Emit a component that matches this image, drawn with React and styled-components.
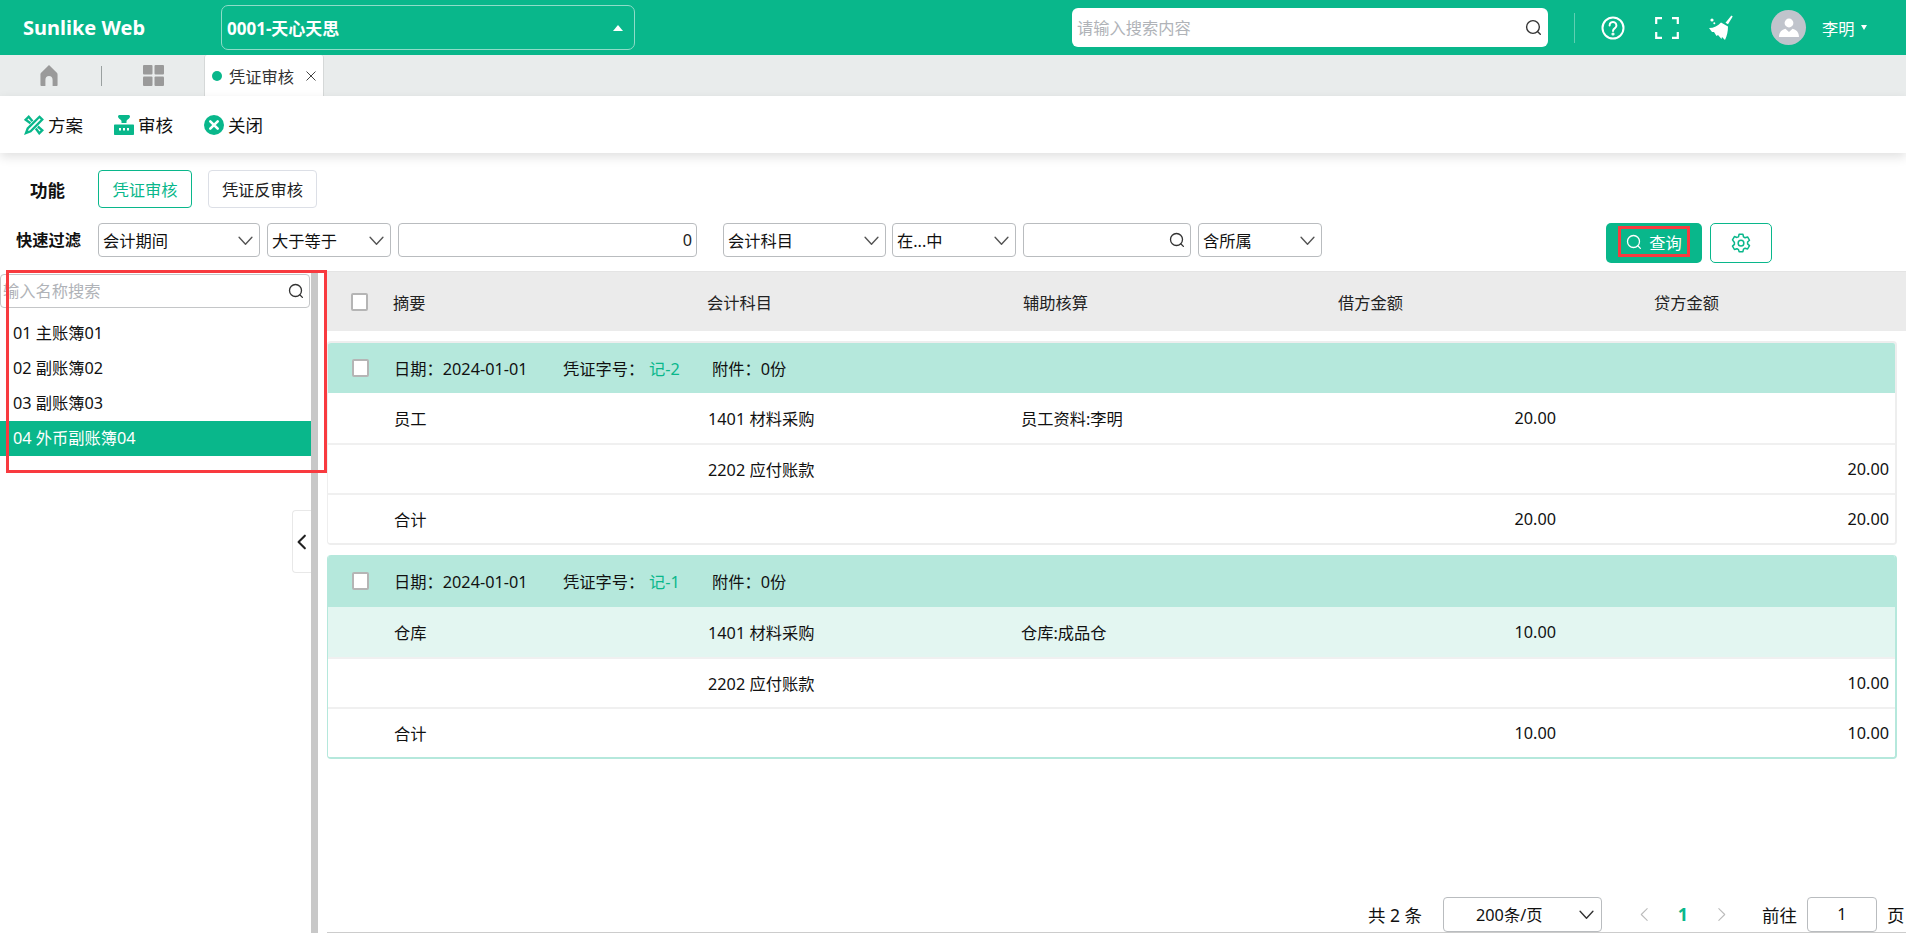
import React from "react";
import styled, { createGlobalStyle } from "styled-components";

const GREEN = "#09b78b";
const RED = "#f83a3f";
const FONT = `"Noto Sans", "Noto Sans CJK SC", sans-serif`;

const Global = createGlobalStyle`
  html, body { margin: 0; padding: 0; background: #fff; }
  body { font-family: ${FONT}; font-size: 16.25px; color: #111; }
  * { box-sizing: border-box; }
`;

const Page = styled.div`
  width: 1906px; height: 933px; display: flex; flex-direction: column; overflow: hidden; background: #fff;
`;

/* ---------- top bar ---------- */
const TopBar = styled.header`
  height: 55px; flex: none; background: ${GREEN}; display: flex; align-items: center; color: #fff;
`;
const Logo = styled.div`
  width: 221px; padding-left: 23px; font-size: 20px; font-weight: 700; line-height: 1;
`;
const CompanySelect = styled.div`
  width: 414px; height: 45px; border: 1px solid #8fdcc8; border-radius: 7px; display: flex; align-items: center;
  justify-content: space-between; padding: 0 11px 0 5px; font-size: 17px; font-weight: 700;
`;
const UpCaret = styled.span`
  width: 0; height: 0; border-left: 5px solid transparent; border-right: 5px solid transparent; border-bottom: 6px solid #fff;
`;
const GlobalSearch = styled.div`
  margin-left: 437px; width: 476px; height: 39px; background: #fff; border-radius: 6px; display: flex; align-items: center;
  padding: 0 6px 0 5px; color: #222;
`;
const GlobalInput = styled.input`
  flex: 1; min-width: 0; border: 0; outline: 0; background: transparent; font: 16.25px ${FONT}; padding: 0; color: #222;
  &::placeholder { color: #b0b3b8; }
`;
const HeadDivider = styled.span`
  width: 1px; height: 30px; background: #5fcfb2; margin-left: 26px;
`;
const HeadIcons = styled.div`
  display: flex; align-items: center; margin-left: 26px; gap: 30px;
`;
const HeadIcon = styled.span`
  width: 24px; height: 24px; display: flex; align-items: center; justify-content: center;
`;
const Avatar = styled.span`
  width: 35px; height: 35px; border-radius: 50%; background: #c0c4cc; margin-left: 38px; display: flex; align-items: center; justify-content: center;
`;
const UserName = styled.span`
  margin-left: 16px; font-size: 16.25px; display: flex; align-items: center; gap: 6px;
`;
const DownCaret = styled.span`
  width: 0; height: 0; border-left: 3.5px solid transparent; border-right: 3.5px solid transparent; border-top: 5px solid #fff;
`;

/* ---------- tab bar ---------- */
const TabBar = styled.nav`
  height: 41px; flex: none; background: #e9ecec; display: flex; align-items: center;
`;
const HomeCell = styled.span`
  width: 101px; padding-left: 40px; display: flex; align-items: center;
`;
const GridCell = styled.span`
  width: 102px; display: flex; justify-content: center; align-items: center;
`;
const TabSep = styled.span`
  width: 1px; height: 20px; background: #9aa0a0;
`;
const ActiveTab = styled.div`
  width: 120px; height: 41px; background: #fff; border-left: 1px solid #d5d8d8; border-right: 1px solid #d5d8d8;
  border-radius: 3px 3px 0 0; display: flex; align-items: center; padding-left: 7px; font-size: 16.25px; color: #333;
`;
const Dot = styled.span`
  width: 10px; height: 10px; border-radius: 50%; background: ${GREEN}; margin-right: 7px;
`;
const TabClose = styled.span`
  margin-left: 12px; display: flex;
`;

/* ---------- toolbar ---------- */
const Toolbar = styled.div`
  height: 57px; flex: none; display: flex; align-items: center; padding-left: 24px; gap: 31px; background: #fff;
  box-shadow: 0 4px 10px rgba(0,0,0,.12); position: relative;
`;
const ToolItem = styled.div`
  display: flex; align-items: center; gap: 4px; font-size: 17.5px; color: #111;
`;

/* ---------- filters ---------- */
const FuncRow = styled.div`
  display: flex; align-items: center; height: 38px; margin-top: 17px; padding-left: 30px; flex: none;
`;
const FuncLabel = styled.span`
  width: 68px; font-size: 17.5px; font-weight: 700;
`;
const FuncBtn = styled.button`
  height: 38px; width: ${p => p.$w}px; margin-right: 16px; background: #fff; border-radius: 4px; font: 16.25px ${FONT}; padding: 0;
  border: 1px solid ${p => (p.$active ? GREEN : "#dcdfe6")}; color: ${p => (p.$active ? GREEN : "#222")};
`;
const FilterRow = styled.div`
  display: flex; align-items: flex-start; height: 40px; margin-top: 15px; padding-left: 16px; flex: none;
`;
const FilterLabel = styled.span`
  width: 82px; height: 34px; line-height: 34px; font-size: 16.25px; font-weight: 700;
`;
const Select = styled.div`
  width: ${p => p.$w}px; height: 34px; margin-right: ${p => p.$mr ?? 7}px; flex: none; border: 1.5px solid #b9bcbf; border-radius: 4px;
  display: flex; align-items: center; justify-content: space-between; padding: 0 6px 0 4px; font-size: 16.25px; background: #fff;
`;
const TextInput = styled.input`
  width: ${p => p.$w}px; height: 34px; margin-right: ${p => p.$mr ?? 7}px; flex: none; border: 1.5px solid #b9bcbf; border-radius: 4px;
  outline: 0; padding: 0 4px; font: 16.25px ${FONT}; text-align: right; color: #222;
`;
const SearchField = styled.div`
  width: ${p => p.$w}px; height: 34px; margin-right: 7px; flex: none; border: 1.5px solid #b9bcbf; border-radius: 4px;
  display: flex; align-items: center; justify-content: flex-end; padding-right: 5px;
`;
const QueryBtn = styled.button`
  margin-left: 284px; width: 96px; height: 40px; border: 0; border-radius: 5px; background: ${GREEN}; color: #fff; padding: 0;
  display: flex; align-items: flex-start; justify-content: center; font: 16.25px ${FONT};
`;
const QueryMark = styled.span`
  margin-top: 3px; width: 72px; height: 31px; border: 3px solid ${RED}; display: flex; align-items: center; justify-content: center; gap: 7px;
`;
const GearBtn = styled.button`
  margin-left: 8px; width: 62px; height: 40px; border: 1px solid ${GREEN}; border-radius: 5px; background: #fff; padding: 0;
  display: flex; align-items: center; justify-content: center;
`;

/* ---------- body ---------- */
const Body = styled.div`
  flex: 1; min-height: 0; display: flex; position: relative; margin-top: 8px;
`;
const Side = styled.aside`
  width: 311px; flex: none; position: relative; padding-top: 3px;
`;
const SideSearch = styled.div`
  height: 34px; border: 1.5px solid #c4c6c8; border-left-width: 1px; border-radius: 4px; display: flex; align-items: center; padding: 0 5px 0 2px; margin-right: 1px;
`;
const SideInput = styled.input`
  flex: 1; min-width: 0; border: 0; outline: 0; font: 16.25px ${FONT}; padding: 0;
  &::placeholder { color: #b0b3b8; }
`;
const SideList = styled.ul`
  list-style: none; margin: 8px 0 0; padding: 0;
`;
const SideItem = styled.li`
  height: 35px; line-height: 35px; padding-left: 13px; font-size: 16.25px;
  background: ${p => (p.$active ? GREEN : "transparent")}; color: ${p => (p.$active ? "#fff" : "#111")};
`;
const Collapse = styled.div`
  position: absolute; left: 292px; top: 239px; width: 19px; height: 63px; background: #fff; border: 1px solid #e8e8e8; border-right: 0;
  border-radius: 4px 0 0 4px; display: flex; align-items: center; justify-content: center;
`;
const Splitter = styled.div`
  width: 7px; flex: none; background: #c8c8c8;
`;
const RedBox = styled.div`
  position: absolute; left: 6px; top: -1px; width: 321px; height: 203px; border: 3px solid ${RED}; pointer-events: none;
`;
const Main = styled.main`
  flex: 1; min-width: 0; display: flex; flex-direction: column; padding-left: 9px;
`;
const TableHead = styled.div`
  height: 60px; flex: none; background: #ebebeb; border-top: 1px solid #e4e4e4; display: grid; grid-template-columns: 66px 314px 316px 315px 316px 1fr; align-items: center; font-size: 16.25px; color: #222;
`;
const CheckCell = styled.span`
  display: flex; padding-left: 24px;
`;
const Check = styled.span`
  width: 17px; height: 18px; background: #fff; border: 2px solid #b5b5b5; border-radius: 2px; display: block;
`;
const Vouchers = styled.div`
  flex: 1; min-height: 0; padding: 10px 9px 0 0; display: flex; flex-direction: column; gap: 10px;
`;
const Card = styled.section`
  border: 2px solid ${p => (p.$active ? "#b5e8dc" : "#eeeeee")}; border-left-width: 1px; border-radius: 4px; border-top-width: ${p => (p.$active ? 0 : 2)}px; overflow: hidden;
`;
const CardHead = styled.div`
  height: ${p => (p.$active ? 52 : 50)}px; background: #b5e8dc; display: flex; align-items: center; font-size: 16.25px;
`;
const Meta = styled.span`
  width: ${p => p.$w}px; flex: none; white-space: nowrap;
`;
const VoucherNo = styled.span`
  color: ${GREEN}; width: 63px; flex: none;
`;
const Row = styled.div`
  height: 50px; display: grid; grid-template-columns: 66px 314px 313px 317px 218px 333px; align-items: center; font-size: 16.25px;
  background: ${p => (p.$hl ? "#e3f6f1" : "#fff")}; border-top: ${p => (p.$first ? 0 : "2px solid #f0f0f0")};
`;
const Amount = styled.span`
  text-align: right;
`;
const Pager = styled.footer`
  height: 37px; flex: none; display: flex; align-items: center; padding-left: 1041px; font-size: 16.25px; white-space: nowrap; margin-top: auto; border-bottom: 1.5px solid #ccc;
`;
const PagerTotal = styled.span`
  width: 75px; font-size: 17.5px;
`;
const PagerSelect = styled.div`
  width: 159px; height: 35px; border: 1.5px solid #b9bcbf; border-radius: 4px; display: flex; align-items: center; justify-content: space-between; padding: 0 7px 0 32px; margin-right: 35px;
`;
const PageNo = styled.span`
  width: 62px; text-align: center; color: ${GREEN}; font-weight: 700; font-size: 18px;
`;
const GoLabel = styled.span`
  margin-left: 33px; width: 45px; font-size: 17.5px;
`;
const GoInput = styled.div`
  width: 70px; height: 35px; border: 1.5px solid #b9bcbf; border-radius: 4px; text-align: center; line-height: 32px;
`;
const GoUnit = styled.span`
  margin-left: 10px; font-size: 17.5px;
`;

/* ---------- icons ---------- */
const SearchIcon = ({ size = 16, color = "#333", w = 1.3 }) => (
  <svg width={size} height={size} viewBox="0 0 16 16" fill="none" stroke={color} strokeWidth={w} strokeLinecap="round">
    <circle cx="7.5" cy="7.5" r="6" />
    <path d="M12 12l2.4 2.4" />
  </svg>
);
const Chevron = ({ size = 14, color = "#555", dir = "down", w = 1.3 }) => {
  const d = { down: "M1 4l6 6.5L13 4", left: "M9.5 1.5L4 7l5.5 5.5", right: "M4.5 1.5L10 7l-5.5 5.5" }[dir];
  return (
    <svg width={size} height={size} viewBox="0 0 14 14" fill="none" stroke={color} strokeWidth={w} strokeLinecap="round" strokeLinejoin="round">
      <path d={d} />
    </svg>
  );
};
const HelpIcon = () => (
  <svg width="24" height="24" viewBox="0 0 24 24" fill="none" stroke="#fff" strokeWidth="2" strokeLinecap="round">
    <circle cx="12" cy="12" r="10.5" />
    <path d="M8.6 9.4a3.4 3.4 0 1 1 5.3 2.8c-1.2.8-1.9 1.4-1.9 2.9" />
    <circle cx="12" cy="18" r=".6" fill="#fff" />
  </svg>
);
const FullIcon = () => (
  <svg width="24" height="22" viewBox="0 0 24 22" fill="none" stroke="#fff" strokeWidth="2.2">
    <path d="M1.2 7V1.2H7M17 1.2h5.8V7M22.8 15v5.8H17M7 20.8H1.2V15" />
  </svg>
);
const BroomIcon = () => (
  <svg width="24" height="26" viewBox="0 0 24 26" fill="#fff">
    <path d="M22.4.5l1.3 1-4.700 7.700-2.500-1.500z" />
    <path d="M12 7.500l7 4c0 4.500-1 9.500-3 13.500l-3-3-.5 2-3.500-4-1.500 1L5 17H3L0 13c5 0 9-2 12-5.500z" />
    <circle cx="3" cy="5" r="1.600" />
    <circle cx="5.300" cy="8.300" r="1" />
  </svg>
);
const UserIcon = () => (
  <svg width="22" height="22" viewBox="0 0 22 22" fill="#fff">
    <circle cx="11" cy="6" r="4.400" />
    <path d="M1 20c0-5 3-7.500 6.400-8.300L11 15l3.600-3.300C18 12.500 21 15 21 20z" />
  </svg>
);
const HomeIcon = () => (
  <svg width="18" height="21" viewBox="0 0 20 21" fill="#9a9a9a" preserveAspectRatio="none">
    <path d="M10 0l9 8c.4.500.5 1 .5 2v10c0 .6-.4 1-1 1H14v-6c0-2.500-1.500-4-4-4s-4 1.500-4 4v6H1.500c-.6 0-1-.4-1-1V10c0-1 .1-1.500.5-2z" />
  </svg>
);
const GridIcon = () => (
  <svg width="21" height="21" viewBox="0 0 21 21" fill="#9a9a9a">
    <rect width="9.500" height="9.500" rx="1" />
    <rect x="11.500" width="9.500" height="9.500" rx="1" />
    <rect y="11.500" width="9.500" height="9.500" rx="1" />
    <rect x="11.500" y="11.500" width="9.500" height="9.500" rx="1" />
  </svg>
);
const CloseX = () => (
  <svg width="10" height="10" viewBox="0 0 10 10" stroke="#444" strokeWidth="1" fill="none">
    <path d="M.5.5l9 9M9.500.5l-9 9" />
  </svg>
);
const PlanIcon = () => (
  <svg width="20" height="20" viewBox="0 0 20 20" fill="none" stroke={GREEN} strokeWidth="2.300" strokeLinejoin="miter">
    <path d="M15.500 1.800l2.800 2.800L6.600 16.300 2 18l1.700-4.500z" />
    <path d="M6.500 8.200L1.700 4.700 4.700 1.700l3.800 4.500M11.800 13.500l3.500 4.800 3-3-4.500-3.800" />
  </svg>
);
const StampIcon = () => (
  <svg width="20" height="20" viewBox="0 0 20 20" fill={GREEN}>
    <path d="M5.500 0h9c.8 0 1.500.7 1.500 1.500 0 1.200-1 2-2 2.700-.8.500-1.500 1.200-1.500 2.300v1.500h-5V6.500c0-1.100-.7-1.800-1.500-2.300-1-.7-2-1.500-2-2.700C4 .7 4.700 0 5.500 0z" />
    <path fillRule="evenodd" d="M1 9.500h18c.6 0 1 .4 1 1V19c0 .6-.4 1-1 1H1c-.6 0-1-.4-1-1v-8.500c0-.6.4-1 1-1zM5 13v2.500h2V13zm4 0v2.500h2V13zm4 0v2.500h2V13z" />
  </svg>
);
const CloseCircle = () => (
  <svg width="20" height="20" viewBox="0 0 20 20">
    <circle cx="10" cy="10" r="10" fill={GREEN} />
    <path d="M6.300 6.300l7.400 7.400M13.700 6.300l-7.400 7.400" stroke="#fff" strokeWidth="2.600" strokeLinecap="round" />
  </svg>
);
const GearIcon = () => (
  <svg width="20" height="20" viewBox="0 0 24 24" fill="none" stroke={GREEN} strokeWidth="1.800" strokeLinejoin="round">
    <path d="M9.700 1.500h4.600l.7 3.100 1.900 1.100 3-1 2.300 4-2.300 2.100v2.300l2.300 2.100-2.300 4-3-1-1.900 1.100-.7 3.100H9.700L9 19.900 7.100 18.800l-3 1-2.300-4 2.300-2.100v-2.300L1.800 8.300l2.300-4 3 1L9 4.600z" />
    <circle cx="12" cy="12.200" r="3.400" />
  </svg>
);

const vouchers = [
  {
    no: "记-2", active: false,
    rows: [
      ["员工", "1401 材料采购", "员工资料:李明", "20.00", ""],
      ["", "2202 应付账款", "", "", "20.00"],
      ["合计", "", "", "20.00", "20.00"],
    ],
  },
  {
    no: "记-1", active: true,
    rows: [
      ["仓库", "1401 材料采购", "仓库:成品仓", "10.00", "", true],
      ["", "2202 应付账款", "", "", "10.00"],
      ["合计", "", "", "10.00", "10.00"],
    ],
  },
];

export default function App() {
  return (
    <Page>
      <Global />
      <TopBar>
        <Logo>Sunlike Web</Logo>
        <CompanySelect>0001-天心天思<UpCaret /></CompanySelect>
        <GlobalSearch>
          <GlobalInput placeholder="请输入搜索内容" />
          <SearchIcon size={17} />
        </GlobalSearch>
        <HeadDivider />
        <HeadIcons>
          <HeadIcon><HelpIcon /></HeadIcon>
          <HeadIcon><FullIcon /></HeadIcon>
          <HeadIcon><BroomIcon /></HeadIcon>
        </HeadIcons>
        <Avatar><UserIcon /></Avatar>
        <UserName>李明<DownCaret /></UserName>
      </TopBar>

      <TabBar>
        <HomeCell><HomeIcon /></HomeCell>
        <TabSep />
        <GridCell><GridIcon /></GridCell>
        <ActiveTab>
          <Dot />凭证审核
          <TabClose><CloseX /></TabClose>
        </ActiveTab>
      </TabBar>

      <Toolbar>
        <ToolItem><PlanIcon />方案</ToolItem>
        <ToolItem><StampIcon />审核</ToolItem>
        <ToolItem><CloseCircle />关闭</ToolItem>
      </Toolbar>

      <FuncRow>
        <FuncLabel>功能</FuncLabel>
        <FuncBtn $active $w={94}>凭证审核</FuncBtn>
        <FuncBtn $w={109}>凭证反审核</FuncBtn>
      </FuncRow>

      <FilterRow>
        <FilterLabel>快速过滤</FilterLabel>
        <Select $w={162}>会计期间<Chevron size={15} /></Select>
        <Select $w={124}>大于等于<Chevron size={15} /></Select>
        <TextInput $w={299} $mr={26} defaultValue="0" />
        <Select $w={163} $mr={6}>会计科目<Chevron size={15} /></Select>
        <Select $w={124}>在...中<Chevron size={15} /></Select>
        <SearchField $w={168}><SearchIcon size={16} /></SearchField>
        <Select $w={124} $mr={0}>含所属<Chevron size={15} /></Select>
        <QueryBtn>
          <QueryMark><SearchIcon size={16} color="#fff" />查询</QueryMark>
        </QueryBtn>
        <GearBtn><GearIcon /></GearBtn>
      </FilterRow>

      <Body>
        <Side>
          <SideSearch>
            <SideInput placeholder="输入名称搜索" />
            <SearchIcon size={16} />
          </SideSearch>
          <SideList>
            <SideItem>01 主账簿01</SideItem>
            <SideItem>02 副账簿02</SideItem>
            <SideItem>03 副账簿03</SideItem>
            <SideItem $active>04 外币副账簿04</SideItem>
          </SideList>
          <Collapse><Chevron size={16} color="#222" dir="left" w={1.8} /></Collapse>
        </Side>
        <Splitter />
        <Main>
          <TableHead>
            <CheckCell><Check /></CheckCell>
            <span>摘要</span>
            <span>会计科目</span>
            <span>辅助核算</span>
            <span>借方金额</span>
            <span>贷方金额</span>
          </TableHead>
          <Vouchers>
            {vouchers.map(v => (
              <Card key={v.no} $active={v.active}>
                <CardHead $active={v.active}>
                  <CheckCell><Check /></CheckCell>
                  <Meta $w={25} />
                  <Meta $w={169}>日期：2024-01-01</Meta>
                  <Meta $w={86}>凭证字号：</Meta>
                  <VoucherNo>{v.no}</VoucherNo>
                  <Meta $w={90}>附件：0份</Meta>
                </CardHead>
                {v.rows.map((r, i) => (
                  <Row key={i} $first={i === 0} $hl={r[5]}>
                    <span />
                    <span>{r[0]}</span>
                    <span>{r[1]}</span>
                    <span>{r[2]}</span>
                    <Amount>{r[3]}</Amount>
                    <Amount>{r[4]}</Amount>
                  </Row>
                ))}
              </Card>
            ))}
          </Vouchers>
          <Pager>
            <PagerTotal>共 2 条</PagerTotal>
            <PagerSelect>200条/页<Chevron size={15} color="#333" /></PagerSelect>
            <Chevron size={15} color="#bbb" dir="left" w={1} />
            <PageNo>1</PageNo>
            <Chevron size={15} color="#bbb" dir="right" w={1} />
            <GoLabel>前往</GoLabel>
            <GoInput>1</GoInput>
            <GoUnit>页</GoUnit>
          </Pager>
        </Main>
        <RedBox />
      </Body>
    </Page>
  );
}
